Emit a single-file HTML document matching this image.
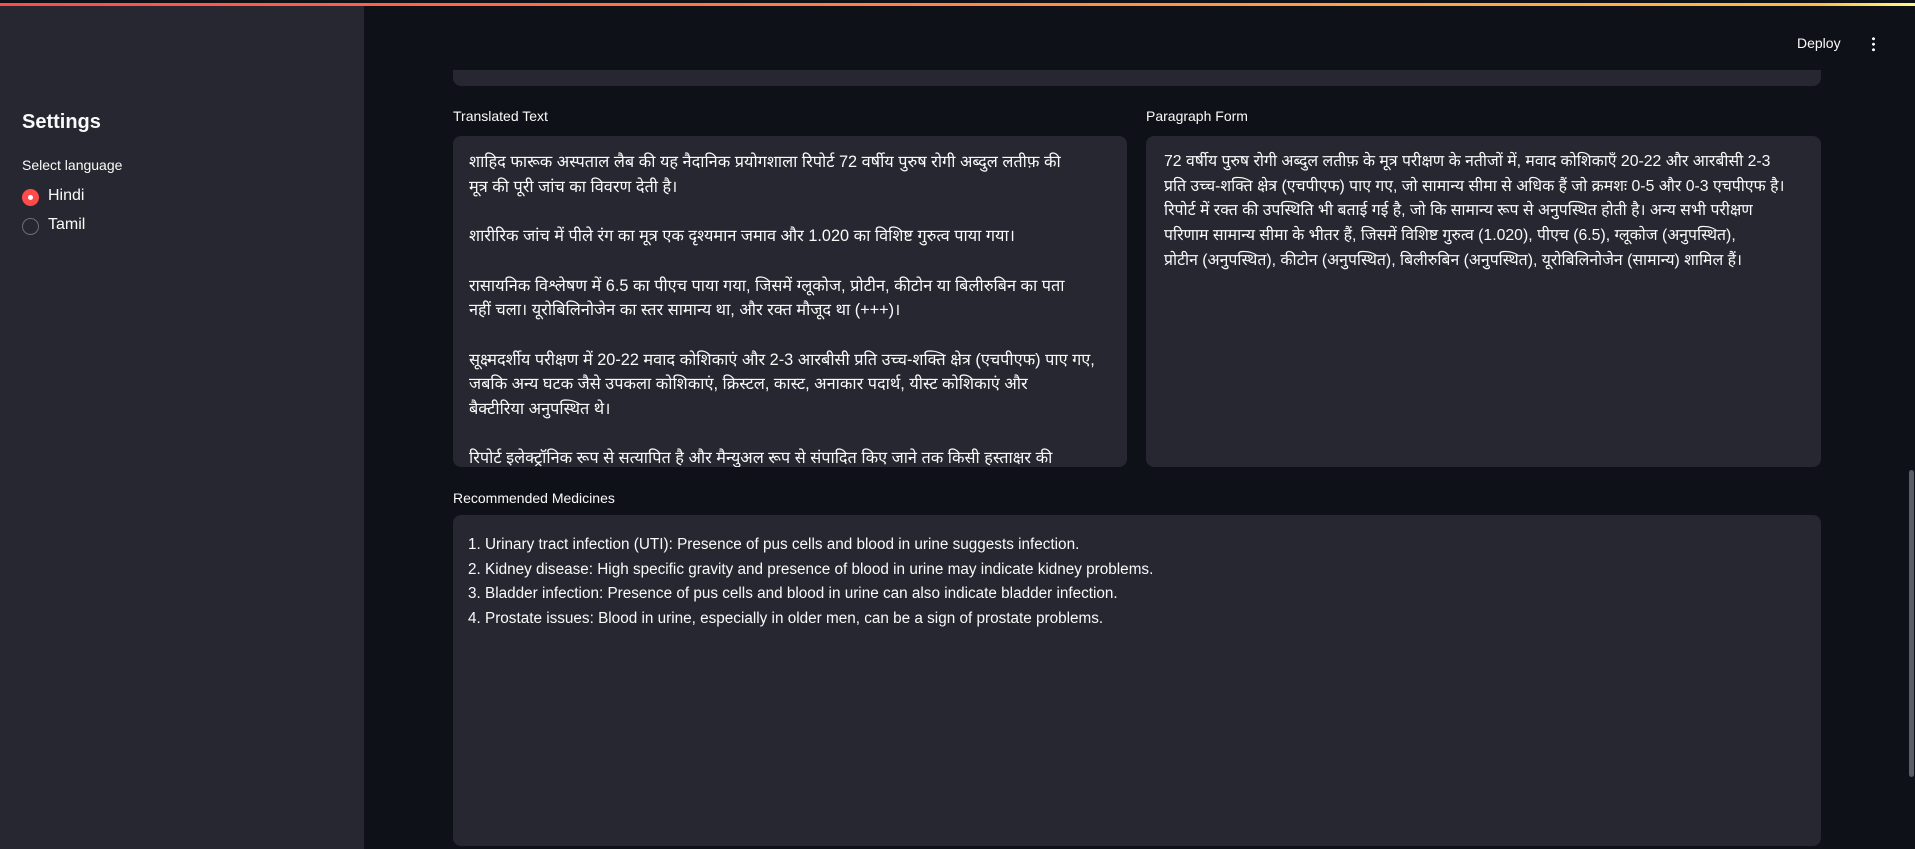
<!DOCTYPE html>
<html><head><meta charset="utf-8"><style>
*{margin:0;padding:0;box-sizing:border-box}
body{width:1915px;height:849px;overflow:hidden;background:#0e1117;color:#fafafa;font-family:"Liberation Sans","Noto Sans CJK SC",sans-serif;position:relative}
.bar{position:absolute;left:0;top:3px;width:1915px;height:3px;background:linear-gradient(90deg,#ff4b4b,#ffbd45 95%,#fffd80);z-index:6}
.hdr{position:absolute;left:0;top:0;width:1915px;height:70px;background:#0e1117;z-index:4}
.side{position:absolute;left:0;top:6px;width:364px;height:843px;background:#262730;z-index:5}
.abs{position:absolute}
.ta{position:absolute;background:#262730;border-radius:8px;overflow:hidden;font-size:15.3px;line-height:24.7px;color:#fafafa;white-space:pre}
.hi{font-size:16.3px}
.lbl{position:absolute;font-size:14px;color:#fafafa}
.radio{position:absolute;width:17px;height:17px;border-radius:50%}
</style></head><body>
<div class="hdr"></div><div class="bar"></div>
<div class="side">
<div class="abs" style="left:22px;top:105px;font-size:20px;font-weight:bold">Settings</div>
<div class="abs" style="left:22px;top:151px;font-size:14px">Select language</div>
<div class="radio" style="left:22px;top:183px;background:#ff4b4b"><div style="position:absolute;left:6px;top:6px;width:5px;height:5px;border-radius:50%;background:#fff"></div></div>
<div class="abs" style="left:48px;top:181px;font-size:16px">Hindi</div>
<div class="radio" style="left:22px;top:212px;border:1px solid #6b6d78"></div>
<div class="abs" style="left:48px;top:210px;font-size:16px">Tamil</div>
</div>
<div class="abs" style="left:1797px;top:35px;font-size:14px;z-index:7">Deploy</div>
<div class="abs" style="left:1872px;top:36px;width:3px;height:16px;z-index:7;background:radial-gradient(circle,#fafafa 1.4px,transparent 1.6px) 0 0/3px 5.5px repeat-y"></div>
<div class="ta" style="left:453px;top:40px;width:1368px;height:46px;border-radius:0 0 8px 8px"></div>
<div class="lbl" style="left:453px;top:108px">Translated Text</div>
<div class="lbl" style="left:1146px;top:108px">Paragraph Form</div>
<div class="ta hi" style="left:453px;top:136px;width:674px;height:331px;padding:14px 16px">शाहिद फारूक अस्पताल लैब की यह नैदानिक प्रयोगशाला रिपोर्ट 72 वर्षीय पुरुष रोगी अब्दुल लतीफ़ की
मूत्र की पूरी जांच का विवरण देती है।

शारीरिक जांच में पीले रंग का मूत्र एक दृश्यमान जमाव और 1.020 का विशिष्ट गुरुत्व पाया गया।

रासायनिक विश्लेषण में 6.5 का पीएच पाया गया, जिसमें ग्लूकोज, प्रोटीन, कीटोन या बिलीरुबिन का पता
नहीं चला। यूरोबिलिनोजेन का स्तर सामान्य था, और रक्त मौजूद था (+++)।

सूक्ष्मदर्शीय परीक्षण में 20-22 मवाद कोशिकाएं और 2-3 आरबीसी प्रति उच्च-शक्ति क्षेत्र (एचपीएफ) पाए गए,
जबकि अन्य घटक जैसे उपकला कोशिकाएं, क्रिस्टल, कास्ट, अनाकार पदार्थ, यीस्ट कोशिकाएं और
बैक्टीरिया अनुपस्थित थे।

रिपोर्ट इलेक्ट्रॉनिक रूप से सत्यापित है और मैन्युअल रूप से संपादित किए जाने तक किसी हस्ताक्षर की</div>
<div class="ta hi" style="left:1146px;top:136px;width:675px;height:331px;padding:14px 18px;font-size:15.8px">72 वर्षीय पुरुष रोगी अब्दुल लतीफ़ के मूत्र परीक्षण के नतीजों में, मवाद कोशिकाएँ 20-22 और आरबीसी 2-3
प्रति उच्च-शक्ति क्षेत्र (एचपीएफ) पाए गए, जो सामान्य सीमा से अधिक हैं जो क्रमशः 0-5 और 0-3 एचपीएफ है।
रिपोर्ट में रक्त की उपस्थिति भी बताई गई है, जो कि सामान्य रूप से अनुपस्थित होती है। अन्य सभी परीक्षण
परिणाम सामान्य सीमा के भीतर हैं, जिसमें विशिष्ट गुरुत्व (1.020), पीएच (6.5), ग्लूकोज (अनुपस्थित),
प्रोटीन (अनुपस्थित), कीटोन (अनुपस्थित), बिलीरुबिन (अनुपस्थित), यूरोबिलिनोजेन (सामान्य) शामिल हैं।</div>
<div class="lbl" style="left:453px;top:490px">Recommended Medicines</div>
<div class="ta" style="left:453px;top:515px;width:1368px;height:331px;padding:18px 15px">1. Urinary tract infection (UTI): Presence of pus cells and blood in urine suggests infection.
2. Kidney disease: High specific gravity and presence of blood in urine may indicate kidney problems.
3. Bladder infection: Presence of pus cells and blood in urine can also indicate bladder infection.
4. Prostate issues: Blood in urine, especially in older men, can be a sign of prostate problems.</div>
<div class="abs" style="left:1909px;top:470px;width:5px;height:307px;background:#5a5c66;border-radius:3px"></div>
</body></html>
